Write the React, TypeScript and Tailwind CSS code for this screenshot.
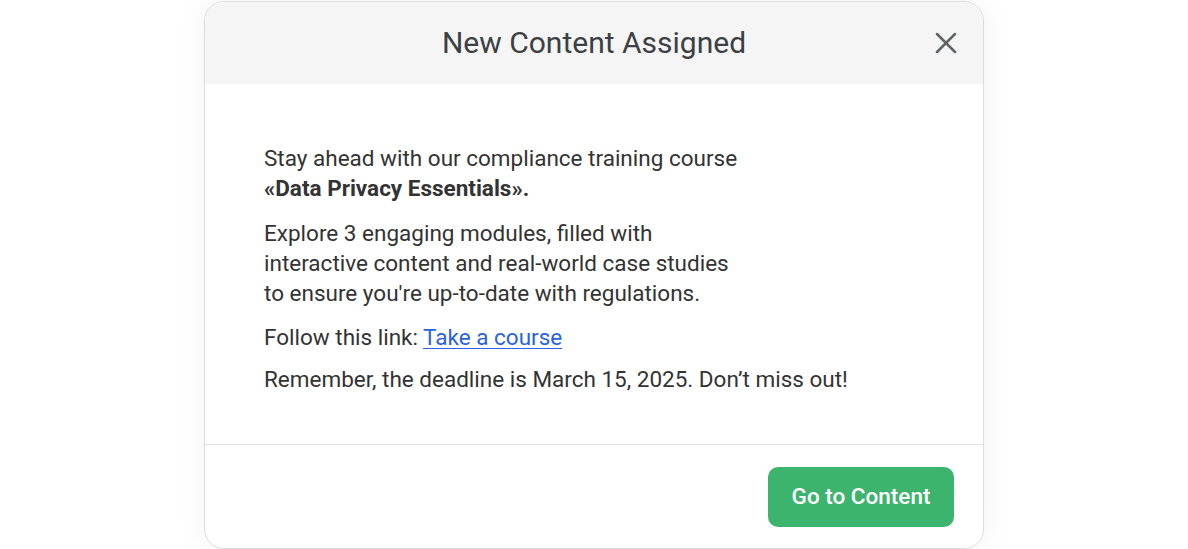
import { X } from 'lucide-react';

export default function App() {
  return (
    <div className="h-[549px] w-full bg-white overflow-hidden" style={{ fontFamily: 'Roboto, "Noto Sans", sans-serif' }}>
      <div className="mx-auto mt-px w-[780px] h-[548px] rounded-[20px] border border-[#dcdcdc] bg-white shadow-[0_0_30px_rgba(0,0,0,0.06)] overflow-hidden flex flex-col">
        {/* Header */}
        <div className="relative h-[82px] shrink-0 bg-[#f5f5f5] flex items-center justify-center">
          <h2 className="text-[30px] text-[#3c4043] leading-none">New Content Assigned</h2>
          <button className="absolute right-[19px] top-[23px] text-[#5f6368]">
            <X className="w-[36px] h-[36px]" strokeWidth={1.7} />
          </button>
        </div>

        {/* Body */}
        <div className="flex-1 px-[59px] pt-[59px] text-[22.5px] leading-[30px] text-[#333]">
          <p>
            Stay ahead with our compliance training course
            <br />
            <b className="font-bold">«Data Privacy Essentials».</b>
          </p>
          <p className="mt-[15px]">
            Explore 3 engaging modules, filled with
            <br />
            interactive content and real-world case studies
            <br />
            to ensure you're up-to-date with regulations.
          </p>
          <p className="mt-[14px]">
            Follow this link:{' '}
            <a href="#" className="text-[#2b62e0] underline underline-offset-[3px] decoration-1">
              Take a course
            </a>
          </p>
          <p className="mt-[12px]">Remember, the deadline is March 15, 2025. Don’t miss out!</p>
        </div>

        {/* Footer */}
        <div className="h-[104px] shrink-0 border-t border-[#e2e2e2] flex items-center justify-end pr-[29px]">
          <button className="h-[60px] w-[186px] rounded-[10px] bg-[#3db46e] text-white text-[22.5px] font-medium">
            Go to Content
          </button>
        </div>
      </div>
    </div>
  );
}
